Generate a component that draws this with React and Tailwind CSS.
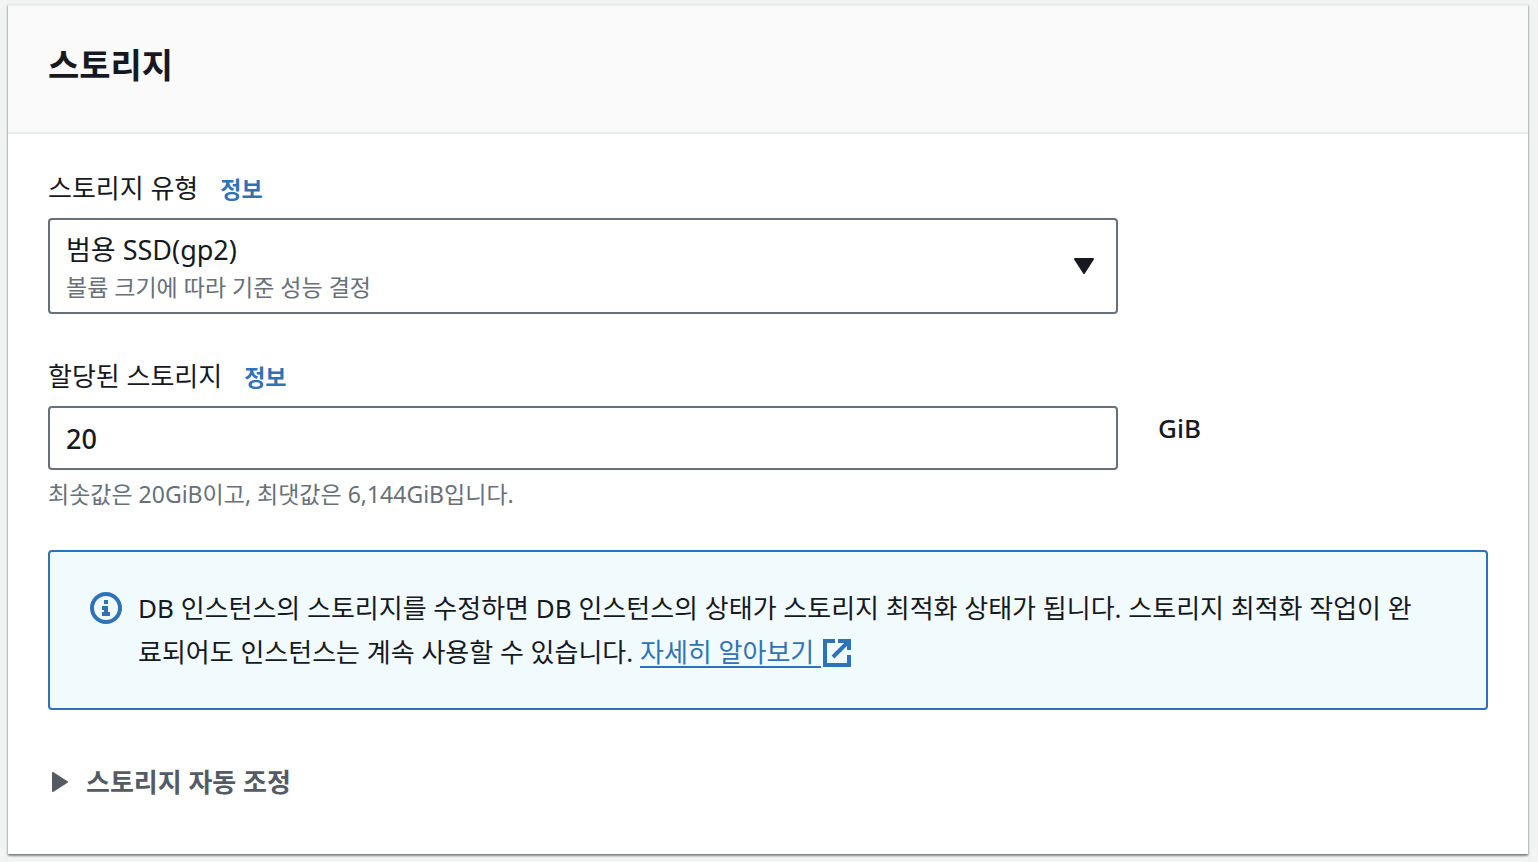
import { useState } from "react";

function InfoLink({ topic }) {
  return (
    <a href="#info" aria-label={`정보: ${topic}`} className="text-[23px] leading-9 font-bold text-[#2e73b8] hover:underline">
      정보
    </a>
  );
}

function FieldLabel({ htmlFor, children }) {
  return (
    <div className="flex items-baseline gap-[22px] leading-[44px]">
      <label htmlFor={htmlFor}>{children}</label>
      <InfoLink topic={children} />
    </div>
  );
}

function InfoIcon() {
  return (
    <svg viewBox="0 0 32 32" className="mt-[6px] size-8 shrink-0" fill="none" aria-hidden="true">
      <circle cx="16" cy="16" r="14" stroke="#2e73b8" strokeWidth="4" />
      <path d="M14 8h4v4h-4zM12 14h6v6h2v4h-8v-4h2v-2h-2z" fill="#2e73b8" />
    </svg>
  );
}

function ExternalIcon() {
  return (
    <svg viewBox="0 0 28 28" className="ml-[2px] inline-block size-7 align-[-5px]" fill="none" stroke="#2e73b8" strokeWidth="4" aria-hidden="true">
      <path d="M12 2H2v24h24V16" />
      <path d="M15 2h11v9M26 2L10 18" />
    </svg>
  );
}

export default function App() {
  const [amount, setAmount] = useState("20");
  const [open, setOpen] = useState(false);

  return (
    <main className="bg-[#f2f3f3] px-2 pt-1 pb-2 pr-[10px] font-['Noto_Sans','Noto_Sans_CJK_KR',sans-serif] text-[26px] leading-[44px] text-[#16191f]">
      <section className="border-t-2 border-[#eaeded] bg-white shadow-[0_2px_2px_0_rgba(0,28,36,0.4),1px_1px_2px_0_rgba(0,28,36,0.15),-1px_1px_2px_0_rgba(0,28,36,0.15)]">
        <header className="border-b-2 border-[#eaeded] bg-[#fafafa] px-10 pt-[27px] pb-[35px]">
          <h2 className="text-[34px] leading-[64px] font-bold">스토리지</h2>
        </header>

        <div className="px-10 pt-8 pb-[50px]">
          <div className="grid grid-cols-4 gap-x-10">
            <div className="col-span-3">
              <FieldLabel htmlFor="storage-type">스토리지 유형</FieldLabel>
              <div className="mt-2 grid rounded border-2 border-[#687078]">
                <select
                  id="storage-type"
                  aria-describedby="storage-type-description"
                  className="col-start-1 row-start-1 h-[92px] appearance-none bg-transparent px-4 pb-8 text-[27px] outline-none"
                >
                  <option>범용 SSD(gp2)</option>
                </select>
                <div className="pointer-events-none col-start-1 row-start-1 flex items-center justify-between pr-[22px] pl-4">
                  <p id="storage-type-description" className="pt-[42px] text-[23px] leading-[40px] text-[#687078]">
                    볼륨 크기에 따라 기준 성능 결정
                  </p>
                  <svg viewBox="0 0 20 16" className="h-4 w-5" aria-hidden="true">
                    <path d="M1 1h18L10 15z" fill="#16191f" stroke="#16191f" strokeWidth="2" strokeLinejoin="round" />
                  </svg>
                </div>
              </div>
            </div>
          </div>

          <div className="mt-10">
            <FieldLabel htmlFor="allocated-storage">할당된 스토리지</FieldLabel>
            <div className="mt-2 grid grid-cols-4 gap-x-10">
              <input
                id="allocated-storage"
                value={amount}
                inputMode="numeric"
                aria-describedby="allocated-storage-hint"
                onChange={(e) => setAmount(e.target.value)}
                className="col-span-3 h-16 w-full rounded border-2 border-[#687078] bg-white px-4 text-[27px] font-medium outline-none"
              />
              <span className="font-medium">GiB</span>
            </div>
            <p id="allocated-storage-hint" className="mt-2 text-[23px] leading-8 text-[#687078]">
              최솟값은 20GiB이고, 최댓값은 6,144GiB입니다.
            </p>
          </div>

          <div className="mt-10 flex gap-4 rounded border-2 border-[#2e73b8] bg-[#f1fafd] py-[34px] pr-14 pl-10">
            <InfoIcon />
            <p>
              DB 인스턴스의 스토리지를 수정하면 DB 인스턴스의 상태가 스토리지 최적화 상태가 됩니다. 스토리지 최적화 작업이
              완료되어도 인스턴스는 계속 사용할 수 있습니다.{" "}
              <a href="#learn-more" className="text-[#2e73b8] underline decoration-2 underline-offset-4">
                자세히 알아보기&nbsp;
                <ExternalIcon />
              </a>
            </p>
          </div>

          <button
            type="button"
            aria-expanded={open}
            onClick={() => setOpen(!open)}
            className="mt-[50px] flex items-center gap-[18px] pl-1 font-bold text-[#545b64]"
          >
            <svg viewBox="0 0 16 20" className="h-5 w-4" aria-hidden="true">
              <path d="M1 1v18l14-9z" fill="#545b64" stroke="#545b64" strokeWidth="2" strokeLinejoin="round" />
            </svg>
            스토리지 자동 조정
          </button>
        </div>
      </section>
    </main>
  );
}
